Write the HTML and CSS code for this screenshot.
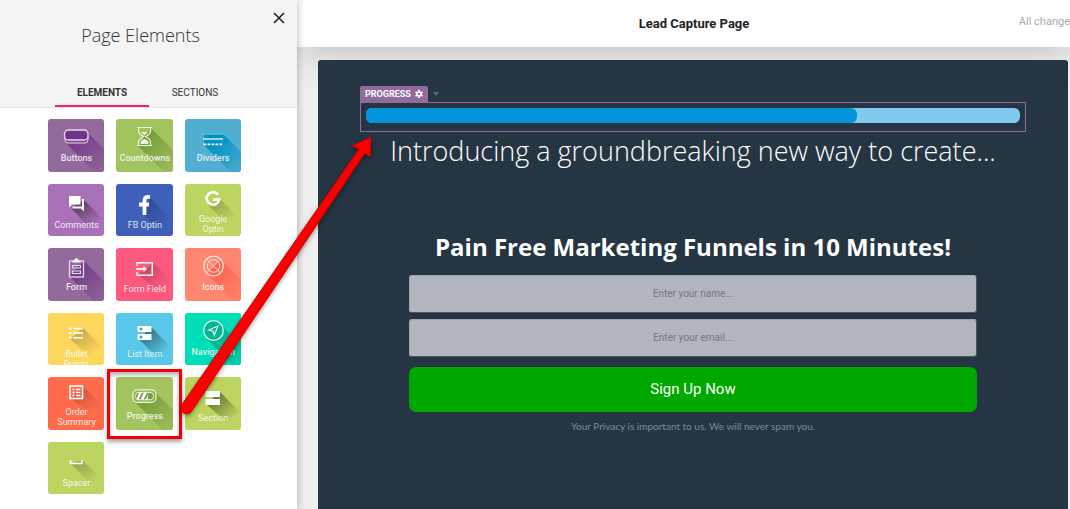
FILE: index.html
```
<!DOCTYPE html>
<html lang="en">
<head>
    <title>Lead Capture Page</title>
    <meta charset="utf-8">
    <meta name="viewport" content="width=device-width, initial-scale=1">

    <link rel="stylesheet" href="styles.css">
</head>

<body>

    <aside class="sidebar">
        <div class="sidebar-header">
            <button type="button" class="close" aria-label="Close">
                <svg width="12" height="12" viewBox="0 0 12 12"><path d="M1 1L11 11M11 1L1 11" stroke="#222" stroke-width="1.6"/></svg>
            </button>
            <h2>Page Elements</h2>
            <nav class="tabs">
                <button type="button" class="tab active">ELEMENTS</button>
                <button type="button" class="tab">SECTIONS</button>
            </nav>
        </div>

        <div class="tiles">
            <button type="button" class="tile purple strong">
                <svg viewBox="0 0 57 53">
                    <path d="M39 13L57 31V53H46L17 23Z" fill="url(#fade-purple)"/>
                    <path d="M17 17v4q0 3 3 3h17q3 0 3-3v-4" fill="#7a4590" stroke="#e6d9ea"/>
                    <rect x="16.500" y="11" width="23.500" height="10" rx="4" fill="#6f3487" stroke="#e6d9ea" stroke-width="1.300"/>
                </svg>
                <span>Buttons</span>
            </button>
            <button type="button" class="tile green strong">
                <svg viewBox="0 0 57 53">
                    <path d="M35 9L57 31V53H48L22 27L28 18Z" fill="url(#fade-green)"/>
                    <path d="M21 8.500H36M21 26.500H36M22.500 9v3q0 3 5 5.500q-5 2.500-5 6v3M34.500 9v3q0 3-5 5.500q5 2.500 5 6v3" fill="none" stroke="#eff6e0" stroke-width="1.200"/>
                    <path d="M25 13h7l-3.500 3ZM24.500 25q0-4 4-5q4 1 4 5Z" fill="#eff6e0"/>
                </svg>
                <span>Countdowns</span>
            </button>
            <button type="button" class="tile blue strong">
                <svg viewBox="0 0 57 53">
                    <path d="M37 14L57 34V53H46L19 26V14Z" fill="url(#fade-blue)"/>
                    <path d="M18.500 15H38" stroke="#d8eef6" stroke-width="1.700" stroke-dasharray="1 1"/>
                    <path d="M18 20H38" stroke="#d8eef6" stroke-width="1.300"/>
                    <path d="M18.500 25.300H38" stroke="#fff" stroke-width="1.700" stroke-dasharray="2.700 1.300"/>
                </svg>
                <span>Dividers</span>
            </button>

            <button type="button" class="tile violet">
                <svg viewBox="0 0 57 53">
                    <path d="M36 16L54 34L44 47L23 24Z" fill="url(#fade-dark)"/>
                    <path d="M21 12H32.500V20.500H24L21 23.500Z" fill="#fff"/>
                    <path d="M34 15H36V27.500L33 24.500H24.500V22.500H34Z" fill="#fff"/>
                </svg>
                <span>Comments</span>
            </button>
            <button type="button" class="tile navy">
                <svg viewBox="0 0 57 53">
                    <path d="M34 14L54 34L46 49L27 30Z" fill="url(#fade-soft)"/>
                    <path d="M34 12.800H32Q28.500 12.800 28.500 16.500V31M23 20.500H33" fill="none" stroke="#fff" stroke-width="3.800"/>
                </svg>
                <span>FB Optin</span>
            </button>
            <button type="button" class="tile lime raised">
                <svg viewBox="0 0 57 53">
                    <path d="M35 15L52 32L44 42L23 21Z" fill="url(#fade-soft)"/>
                    <path d="M33 10.500A6.300 6.300 0 1 0 34.200 15.700H28" fill="none" stroke="#fff" stroke-width="2.700"/>
                </svg>
                <span>Google Optin</span>
            </button>

            <button type="button" class="tile purple strong">
                <svg viewBox="0 0 57 53">
                    <path d="M36 13L57 34V53H46L21 28Z" fill="url(#fade-purple)"/>
                    <rect x="21.500" y="13" width="14" height="16" fill="none" stroke="#e6d9ea" stroke-width="1.300"/>
                    <path d="M24.500 14.500V12.500H26.500Q26.500 10.300 28.500 10.300Q30.500 10.300 30.500 12.500H32.500V14.500Z" fill="#fff"/>
                    <rect x="24.500" y="17.500" width="8" height="2.500" fill="none" stroke="#e6d9ea"/>
                    <rect x="24.500" y="23" width="8" height="2.500" fill="none" stroke="#e6d9ea"/>
                </svg>
                <span>Form</span>
            </button>
            <button type="button" class="tile pink">
                <svg viewBox="0 0 57 53">
                    <path d="M37 15L54 32L46 45L22 27Z" fill="url(#fade-soft)"/>
                    <path d="M21 18V14.800H36.300V27.200H21V24" fill="none" stroke="#fff" stroke-width="1.500"/>
                    <path d="M20 21H29" stroke="#fff" stroke-width="1.500"/>
                    <path d="M27.500 18L31 21L27.500 24Z" fill="#fff"/>
                </svg>
                <span>Form Field</span>
            </button>
            <button type="button" class="tile salmon strong">
                <svg viewBox="0 0 57 53">
                    <path d="M35 11L57 33V53H49L21 25Z" fill="url(#fade-salmon)"/>
                    <g fill="none" stroke="#ffe3dd">
                        <circle cx="28.500" cy="18" r="9.800" stroke-width="1.300"/>
                        <circle cx="28.500" cy="18" r="6.300"/>
                        <path d="M21.700 11.200L35.300 24.800M35.300 11.200L21.700 24.800"/>
                    </g>
                </svg>
                <span>Icons</span>
            </button>

            <button type="button" class="tile yellow">
                <svg viewBox="0 0 57 53">
                    <path d="M35 15L54 34L46 47L22 26Z" fill="url(#fade-soft)"/>
                    <path d="M25 15.500H35M25 20H35M25 24.800H35" stroke="#fff" stroke-width="1.600"/>
                    <path d="M21 15.500H23.500M21 20H23.500M21 24.800H23.500" stroke="#fff" stroke-width="2"/>
                </svg>
                <span>Bullet Points</span>
            </button>
            <button type="button" class="tile sky">
                <svg viewBox="0 0 57 53">
                    <path d="M35 14L54 33L44 47L23 26Z" fill="url(#fade-dark)"/>
                    <rect x="21.500" y="13" width="14" height="6" fill="#fff"/>
                    <rect x="21.500" y="21" width="14" height="6" fill="#fff"/>
                    <circle cx="25" cy="16" r="1.500" fill="#3d9cc0"/>
                    <circle cx="25" cy="24" r="1.500" fill="#3d9cc0"/>
                </svg>
                <span>List Item</span>
            </button>
            <button type="button" class="tile teal strong">
                <svg viewBox="0 0 57 53">
                    <path d="M35 11L57 33V53H49L21 25Z" fill="url(#fade-teal)"/>
                    <circle cx="28.500" cy="17.500" r="9.800" fill="#07b594" stroke="#d9fbf4" stroke-width="1.300"/>
                    <path d="M33 13L23.800 17L28 18L29.300 22.300Z" fill="none" stroke="#d9fbf4" stroke-width="1.200"/>
                </svg>
                <span>Navigation</span>
            </button>

            <button type="button" class="tile orange raised">
                <svg viewBox="0 0 57 53">
                    <path d="M35 9L56 30L45 38L23 22Z" fill="url(#fade-soft)"/>
                    <rect x="22" y="9" width="12.500" height="12.500" fill="none" stroke="#fff" stroke-width="1.600"/>
                    <path d="M24.500 12.500H26.500M24.500 15.500H26.500M24.500 18.500H26.500M28 12.500H32.500M28 15.500H32.500M28 18.500H32.500" stroke="#fff" stroke-width="1.600"/>
                </svg>
                <span>Order Summary</span>
            </button>
            <button type="button" class="tile green strong">
                <svg viewBox="0 0 57 53">
                    <path d="M38 14L57 33V53H47L19 25Z" fill="url(#fade-green)"/>
                    <rect x="17" y="12.800" width="23" height="12.500" rx="4.500" fill="#8fb04c" stroke="#eff6e0" stroke-width="1.200"/>
                    <rect x="19.500" y="15.300" width="18" height="7.500" rx="3.500" fill="#789b3b" stroke="#eff6e0"/>
                    <path d="M23 15.500H26L22.500 22.500H20.500ZM28 15.500H31L27.500 22.500H24.500ZM33 15.500L29.500 22.500H32V15.500Z" fill="#fff"/>
                </svg>
                <span>Progress</span>
            </button>
            <button type="button" class="tile lime">
                <svg viewBox="0 0 57 53">
                    <path d="M35 15L55 35L46 49L21 27Z" fill="url(#fade-dark)"/>
                    <rect x="20.500" y="14" width="14.500" height="6" fill="#fff"/>
                    <rect x="20.500" y="22" width="14.500" height="6" fill="#fff"/>
                </svg>
                <span>Section</span>
            </button>

            <button type="button" class="tile lime">
                <svg viewBox="0 0 57 53">
                    <path d="M34 18L53 36L45 44L23 22Z" fill="url(#fade-soft)"/>
                    <path d="M22.500 18V21.500H34V18" fill="none" stroke="#fff" stroke-width="1.600"/>
                </svg>
                <span>Spacer</span>
            </button>
        </div>
    </aside>

    <div class="editor">
        <header class="topbar">
            <h1>Lead Capture Page</h1>
            <span class="status">All change</span>
        </header>

        <main class="canvas">
            <div class="element-tools">
                <button type="button" class="element-tag">PROGRESS
                    <svg width="8" height="8" viewBox="0 0 8 8">
                        <path d="M4 0V8M0.500 2L7.500 6M7.500 2L0.500 6" stroke="#fff" stroke-width="1.800"/>
                        <circle cx="4" cy="4" r="2" fill="#926a9e" stroke="#fff" stroke-width="1.500"/>
                    </svg>
                </button>
                <svg width="6" height="4" viewBox="0 0 6 4"><path d="M0 0H6L3 4Z" fill="#666"/></svg>
            </div>
            <div class="element-box">
                <div class="bar"><div class="bar-fill" style="width: 75%"></div></div>
            </div>

            <p class="intro">Introducing a groundbreaking new way to create...</p>

            <form class="optin">
                <h2>Pain Free Marketing Funnels in 10 Minutes!</h2>
                <input type="text" placeholder="Enter your name..." aria-label="Name">
                <input type="email" placeholder="Enter your email..." aria-label="Email">
                <button type="button" class="submit">Sign Up Now</button>
                <p class="privacy">Your Privacy is important to us. We will never spam you.</p>
            </form>
        </main>
    </div>

    <!-- pointer from the Progress tile to the bar on the page -->
    <div class="highlight"></div>
    <svg class="arrow" width="205" height="290" viewBox="0 0 205 290">
        <path d="M5 276L183 19L176 16L195 7L194 27L189 23L15 282A6 6 0 0 1 5 276Z" fill="#fb0000" stroke="#c80000" stroke-width="1" stroke-linejoin="round"/>
    </svg>

    <!-- long shadows of the tiles -->
    <svg class="defs" width="0" height="0">
        <defs>
            <linearGradient id="fade-purple" x1="0.300" y1="0.200" x2="0.900" y2="0.900"><stop offset="0" stop-color="#753d8b"/><stop offset="1" stop-color="#8d6197"/></linearGradient>
            <linearGradient id="fade-green" x1="0.300" y1="0.200" x2="0.900" y2="0.900"><stop offset="0" stop-color="#7b9e3c"/><stop offset="1" stop-color="#99ba58"/></linearGradient>
            <linearGradient id="fade-blue" x1="0.300" y1="0.200" x2="0.900" y2="0.900"><stop offset="0" stop-color="#0092c3"/><stop offset="1" stop-color="#45a8cd"/></linearGradient>
            <linearGradient id="fade-salmon" x1="0.300" y1="0.200" x2="0.900" y2="0.900"><stop offset="0" stop-color="#fd6550"/><stop offset="1" stop-color="#ff806b"/></linearGradient>
            <linearGradient id="fade-teal" x1="0.300" y1="0.200" x2="0.900" y2="0.900"><stop offset="0" stop-color="#05b18f"/><stop offset="1" stop-color="#02cfaa"/></linearGradient>
            <linearGradient id="fade-dark" x1="0.300" y1="0.200" x2="0.800" y2="0.800"><stop offset="0" stop-color="#000" stop-opacity="0.400"/><stop offset="1" stop-color="#000" stop-opacity="0"/></linearGradient>
            <linearGradient id="fade-soft" x1="0.300" y1="0.200" x2="0.800" y2="0.800"><stop offset="0" stop-color="#000" stop-opacity="0.180"/><stop offset="1" stop-color="#000" stop-opacity="0"/></linearGradient>
        </defs>
    </svg>

</body>
</html>
```

FILE: styles.css
```
* {
    box-sizing: border-box;
}

body {
    margin: 0;
    position: relative;
    display: flex;
    min-height: 100vh;
    overflow-x: hidden;
    font-family: Roboto, sans-serif;
    background-color: #eeeeee;
}

h1, h2, p {
    margin: 0;
}

button {
    border: none;
    padding: 0;
    background: none;
    font-family: inherit;
}

/* Sidebar */
.sidebar {
    flex: 0 0 297px;
    background-color: white;
    box-shadow: 0 0 8px rgba(0, 0, 0, 0.3);
    z-index: 1;
}

.sidebar-header {
    display: flex;
    flex-direction: column;
    height: 108px;
    background-color: #f4f4f4;
    border-bottom: 1px solid #e6e6e6;
}

.sidebar-header h2 {
    padding-right: 16px;
    font: 300 18px/22px "Open Sans", sans-serif;
    color: #333;
    text-align: center;
}

.close {
    align-self: flex-end;
    height: 12px;
    margin: 12px 12px 0 0;
    line-height: 0;
}

.tabs {
    display: flex;
    margin: auto 0 0 55px;
}

.tab {
    width: 92px;
    height: 28px;
    border-bottom: 2px solid transparent;
    font-size: 10px;
    color: #333;
}

.tab.active {
    width: 94px;
    border-color: #f5205a;
    font-weight: bold;
}

/* Tiles */
.tiles {
    display: grid;
    grid-template-columns: repeat(3, 1fr);
    grid-template-rows: repeat(6, 1fr);
    gap: 12px;
    height: 375px;
    margin: 11px 56px 0 48px;
}

.tile {
    display: grid;
    align-items: start;
    justify-items: center;
    overflow: hidden;
    border-radius: 3px;
    font-size: 9px;
    line-height: 10px;
    color: rgba(255, 255, 255, 0.85);
}

.tile svg {
    grid-area: 1 / 1;
    width: 57px;
    height: 53px;
}

.tile span {
    grid-area: 1 / 1;
    padding: 36px 6px 0;
    z-index: 1;
}

.tile.strong span {
    padding: 34px 0 0;
    font-weight: 500;
}

.tile.raised span {
    padding-top: 30px;
}

.purple { background-color: #936a9c; }
.green { background-color: #a1c45f; }
.blue { background-color: #50aed1; }
.violet { background-color: #a971b8; }
.navy { background-color: #3e60b9; }
.lime { background-color: #bcd560; }
.pink { background-color: #ff587e; }
.salmon { background-color: #ff8772; }
.yellow { background-color: #fdd65c; }
.sky { background-color: #59c7e8; }
.teal { background-color: #00deb7; }
.orange { background-color: #ff6c4c; }

/* Editor */
.editor {
    flex: 1;
    display: flex;
    flex-direction: column;
    min-width: 0;
}

.topbar {
    display: grid;
    grid-template-columns: 1fr auto 1fr;
    align-items: center;
    height: 47px;
    padding-left: 21px;
    background-color: white;
    box-shadow: 0 0 40px rgba(0, 0, 0, 0.25);
}

.topbar h1 {
    grid-column: 2;
    font-size: 13px;
    color: #222;
}

.status {
    justify-self: end;
    padding-bottom: 4px;
    font-size: 11px;
    color: #aaa;
}

.canvas {
    flex: 1;
    margin: 13px 2px 0 21px;
    padding: 26px 42px;
    border-radius: 3px 3px 0 0;
    background-color: #263543;
}

.element-tools {
    display: flex;
    align-items: center;
    gap: 5px;
}

.element-tag {
    display: flex;
    align-items: center;
    gap: 4px;
    height: 16px;
    padding: 0 5px;
    border-radius: 2px 2px 0 0;
    background-color: #926a9e;
    font-size: 9px;
    font-weight: bold;
    color: white;
}

.element-box {
    height: 30px;
    padding: 5px;
    border: 1px solid #926a9e;
}

.bar {
    height: 15px;
    border-radius: 6px;
    background-color: #80caee;
}

.bar-fill {
    height: 15px;
    border-radius: 6px;
    background-color: #0394dc;
}

.intro {
    font: 300 27px/38px "Open Sans", sans-serif;
    text-align: center;
    color: white;
}

.optin {
    display: flex;
    flex-direction: column;
    margin: 57px 49px 0;
    text-align: center;
}

.optin h2 {
    margin-bottom: 8px;
    font: bold 24px/40px "Open Sans", sans-serif;
    color: white;
}

.optin input {
    height: 38px;
    margin-bottom: 6px;
    padding: 0 0 2px;
    border: 1px solid;
    border-color: #a0a5ab #50565e #50565e #a0a5ab;
    border-radius: 3px;
    background-color: #b1b6be;
    font: 10px Roboto, sans-serif;
    text-align: center;
}

.optin input::placeholder {
    color: #777;
}

.submit {
    height: 45px;
    margin-top: 4px;
    padding-bottom: 2px;
    border-radius: 7px;
    background-color: #00a800;
    font-size: 15px;
    color: white;
}

.privacy {
    margin-top: 6px;
    font: 10px/16px Lato, sans-serif;
    color: #7e8a90;
}

/* Callout over the page */
.highlight {
    position: absolute;
    top: 369px;
    left: 107px;
    width: 75px;
    height: 70px;
    border: 3px solid #f00000;
    box-shadow: 0 3px 4px rgba(0, 0, 0, 0.35), inset 0 3px 4px rgba(0, 0, 0, 0.3);
    pointer-events: none;
    z-index: 2;
}

.arrow {
    position: absolute;
    top: 130px;
    left: 176px;
    filter: drop-shadow(0 2px 2px rgba(0, 0, 0, 0.4));
    pointer-events: none;
    z-index: 3;
}

.defs {
    position: absolute;
}
```
